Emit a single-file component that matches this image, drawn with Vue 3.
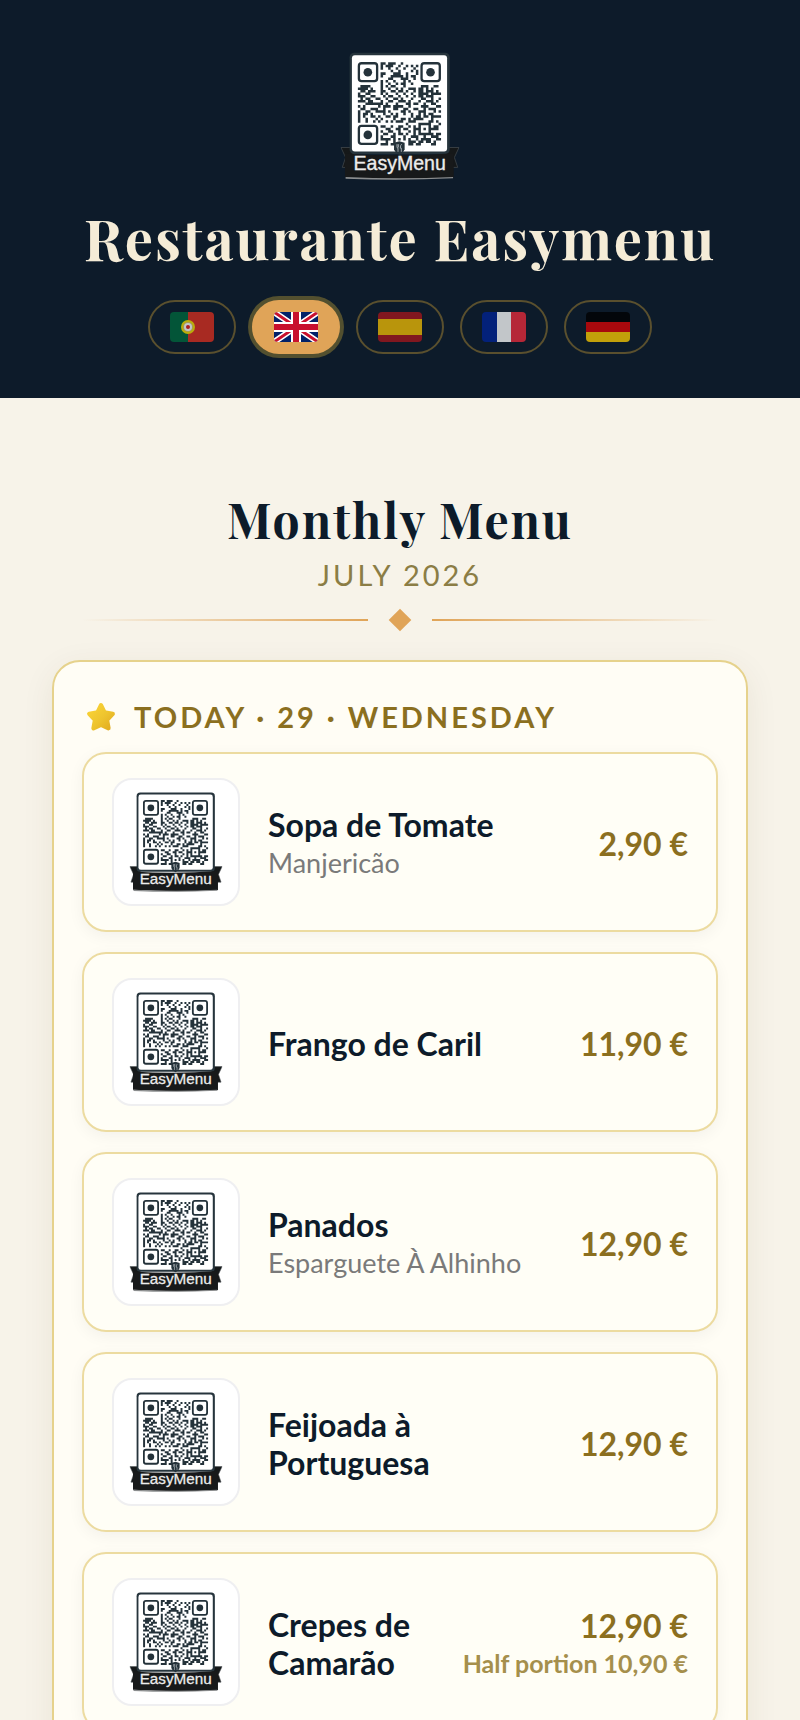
<template>
	<!-- Sprite: logo artwork used in the header and in each dish -->
	<svg class="sprite" aria-hidden="true">
		<symbol id="logo" viewBox="32 34 360 386">
			<path d="M34 322h40v60H38l10-30z" fill="#151819" stroke="#4a5054" stroke-width="2" />
			<path d="M390 322h-40v60h36l-10-30z" fill="#151819" stroke="#4a5054" stroke-width="2" />
			<rect x="60" y="36" width="302" height="306" rx="14" fill="#26343c" />
			<rect x="67" y="44" width="287" height="290" rx="9" fill="#fff" />
			<path :d="qrPath" fill="#24323a" />
			<g v-for="(f, i) in finders" :key="i">
				<rect :x="f.x" :y="f.y" width="55" height="54" rx="8" fill="#fff" stroke="#24323a" stroke-width="7" />
				<circle :cx="f.x + 27" :cy="f.y + 27" r="13" fill="#24323a" />
			</g>
			<path d="M46 341q164 10 328 -2v73q-164 10-328-1z" fill="#17191a" />
			<path d="M48 411q164 8 324 0v4q-164 8-324 1z" fill="#8b8d8e" />
			<path d="M194 308l16-5 16 5v19q-3 10-16 17q-13-7-16-17z" fill="#24323a" />
			<path d="M203 312v8q0 4 3 4v11M207 312v10M217 312q-4 2-4 12h3v11" fill="none" stroke="#dfe4e6" stroke-width="2" />
		</symbol>
	</svg>

	<header class="top">
		<svg class="logo" viewBox="0 0 360 386" role="img" aria-label="EasyMenu">
			<use href="#logo" width="360" height="386" />
			<text x="179" y="356" class="logo-text" text-anchor="middle">EasyMenu</text>
		</svg>
		<h1 class="tit-rest">Restaurante Easymenu</h1>
		<nav class="langs" aria-label="Language">
			<button v-for="l in langs" :key="l.code" type="button" class="lang" :class="{ active: lang === l.code }" :aria-label="l.name" @click="lang = l.code">
				<svg class="flag" viewBox="0 0 44 30">
					<g v-if="l.code === 'pt'">
						<path d="M0 0h18v30H0z" fill="#00693d" />
						<path d="M18 0h26v30H18z" fill="#dc2f20" />
						<circle cx="18" cy="15" r="7" fill="#f5e000" />
						<circle cx="18" cy="15" r="5" fill="#d8c36a" />
						<circle cx="18" cy="15" r="4" fill="#fff" />
						<circle cx="18" cy="15" r="2" fill="#e0201c" />
					</g>
					<g v-else-if="l.code === 'en'">
						<path d="M0 0h44v30H0z" fill="#012169" />
						<path d="M0 0l44 30M44 0L0 30" stroke="#fff" stroke-width="6" />
						<path d="M0 0l44 30M44 0L0 30" stroke="#c8102e" stroke-width="3" />
						<path d="M22 0v30M0 15h44" stroke="#fff" stroke-width="10" />
						<path d="M22 0v30M0 15h44" stroke="#c8102e" stroke-width="6" />
					</g>
					<g v-else-if="l.code === 'es'">
						<path d="M0 0h44v30H0z" fill="#a8161c" />
						<path d="M0 7h44v16H0z" fill="#f3be02" />
					</g>
					<g v-else-if="l.code === 'fr'">
						<path d="M0 0h15v30H0z" fill="#002495" />
						<path d="M15 0h14v30H15z" fill="#fff" />
						<path d="M29 0h15v30H29z" fill="#ee2c3c" />
					</g>
					<g v-else>
						<path d="M0 0h44v10H0z" fill="#000" />
						<path d="M0 10h44v10H0z" fill="#dc0404" />
						<path d="M0 20h44v10H0z" fill="#ffcd00" />
					</g>
				</svg>
			</button>
		</nav>
	</header>

	<main class="menu">
		<h2 class="tit-menu">Monthly Menu</h2>
		<p class="month">July 2026</p>
		<div class="divider"><span class="diamond"></span></div>

		<section class="day">
			<h3 class="tit-day">
				<svg class="star" viewBox="0 0 28 28">
					<defs>
						<linearGradient id="gold" x1="0" y1="0" x2="1" y2="1">
							<stop offset="0" stop-color="#fbd437" />
							<stop offset="0.55" stop-color="#eec42e" />
							<stop offset="1" stop-color="#e2ab20" />
						</linearGradient>
					</defs>
					<path d="M14 3l3.300 6.700 7.700 1.300-5.400 5.800 1.400 7.700-7-3.200-7 3.200 1.400-7.700L3 11l7.700-1.300z" fill="url(#gold)" stroke="url(#gold)" stroke-width="4" stroke-linejoin="round" />
				</svg>
				<span>Today · 29 · Wednesday</span>
			</h3>
			<ul class="dishes">
				<li v-for="d in dishes" :key="d.name" class="dish">
					<div class="thumb">
						<svg class="thumb-logo" viewBox="0 0 360 386" role="img" :aria-label="d.name">
							<use href="#logo" width="360" height="386" />
							<text x="179" y="356" class="logo-text" text-anchor="middle">EasyMenu</text>
						</svg>
					</div>
					<div class="info">
						<h4 class="name">{{ d.name }}</h4>
						<p v-if="d.side" class="side">{{ d.side }}</p>
					</div>
					<div class="prices">
						<div class="price">{{ d.price }} €</div>
						<div v-if="d.half" class="half">Half portion {{ d.half }} €</div>
					</div>
				</li>
			</ul>
		</section>
	</main>
</template>

<script setup>
import { ref } from 'vue'

const lang = ref('en')

const langs = [
	{ code: 'pt', name: 'Português' },
	{ code: 'en', name: 'English' },
	{ code: 'es', name: 'Español' },
	{ code: 'fr', name: 'Français' },
	{ code: 'de', name: 'Deutsch' },
]

const dishes = [
	{ name: 'Sopa de Tomate', side: 'Manjericão', price: '2,90' },
	{ name: 'Frango de Caril', price: '11,90' },
	{ name: 'Panados', side: 'Esparguete À Alhinho', price: '12,90' },
	{ name: 'Feijoada à Portuguesa', price: '12,90' },
	{ name: 'Crepes de Camarão', price: '12,90', half: '10,90' },
]

// the three corner squares of the code
const finders = [
	{ x: 88, y: 68 },
	{ x: 277, y: 68 },
	{ x: 88, y: 257 },
]

const qr = [
	'.........##.###..#...............',
	'.........#.###..#..#.#.#.........',
	'.........#..#..#..#...#..........',
	'.............#..#....#.#.........',
	'.........##...###..#...#.........',
	'.........#...#####.#.##..........',
	'............##...###..#..........',
	'.........#.#..#...#.#............',
	'.........#..#..#.##..#...........',
	'.####....#.#.##...#......###..##.',
	'####.#...#..#..#.#..###.##.#.#...',
	'.##.###..##..##.##.#..#.##.###.#.',
	'#..##....#.#...#..#..#..####.####',
	'###..##...#.##..#..#..#.##.###...',
	'.#.##..##..#..##.#...#...##..#..#',
	'###.##...#..##..###.#...#..###.#.',
	'...#######.#...#...##.##..#..##..',
	'#.#.....#.###.####..#....###...##',
	'.##..###..#...##..##..##..#.###..',
	'#..##..####.#....##.#...###...#.#',
	'#.##.#....#..#.#..#..#..#.#.##...',
	'#.#..##.#..##.##.....#.##.##.####',
	'#..#...#.#....#..##.#.####...#...',
	'#..#..#.#..#.#.###..###.....##.#.',
	'...................#....#####...#',
	'.........##..#..##..#.#.#...#.##.',
	'...........##..##.##..###.#.####.',
	'.........#..##..#...#.#.#...#....',
	'..........##..#.##.#..#.######.##',
	'.........#...##...#..###..#..###.',
	'.........####.#.#.#.#..#.####..##',
	'...........#..#.....###.##.##.#..',
	'.........###.##.....##.##....##..',
]

// one horizontal bar for each run of dark modules
const cell = 7.6
const qrPath = qr.map((row, r) =>
	[...row.matchAll(/#+/g)].map(m => {
		const w = m[0].length * cell
		return `M${85 + m.index * cell} ${65 + r * cell}h${w}v${cell}h${-w}z`
	}).join('')
).join('')
</script>

<style>
body {
	margin: 0;
	background: #f7f3e9;
}
</style>

<style scoped>
h1, h2, h3, h4, p, ul {
	margin: 0;
	padding: 0;
}

.sprite {
	display: block;
	width: 0;
	height: 0;
}

.logo-text {
	font-family: 'Liberation Sans', Arial, sans-serif;
	font-size: 59px;
	fill: #ececec;
	stroke: #ececec;
	stroke-width: 1px;
}

/* Header */
.top {
	display: flex;
	flex-direction: column;
	align-items: center;
	padding: 52px 40px 44px;
	background: #0d1b2a;
}

.logo {
	width: 120px;
	height: 128px;
}

.tit-rest {
	margin: 20px 0 24px;
	color: #f5ecd7;
	font-family: 'Playfair Display', 'Liberation Serif', serif;
	font-size: 56px;
	line-height: 76px;
	font-weight: 700;
	letter-spacing: 2px;
}

.langs {
	display: flex;
	gap: 16px;
}

.lang {
	display: flex;
	align-items: center;
	justify-content: center;
	width: 88px;
	height: 54px;
	padding: 0;
	border: 2px solid #5a502e;
	border-radius: 27px;
	background: transparent;
	cursor: pointer;
}

.lang.active {
	border-color: #e0a458;
	background: #e0a458;
	box-shadow: 0 0 0 4px #53502f;
}

.flag {
	width: 44px;
	height: 30px;
	border-radius: 4px;
	opacity: 0.75;
}

.active .flag {
	opacity: 1;
}

/* Menu */
.menu {
	padding: 86px 52px 40px;
	font-family: Lato, sans-serif;
}

.tit-menu {
	color: #0d1b2a;
	font-family: 'Playfair Display', 'Liberation Serif', serif;
	font-size: 48px;
	line-height: 70px;
	font-weight: 700;
	letter-spacing: 2px;
	text-align: center;
}

.month {
	margin-top: 2px;
	color: #8b7d45;
	font-size: 29px;
	line-height: 38px;
	letter-spacing: 3px;
	text-align: center;
	text-transform: uppercase;
}

.divider {
	display: flex;
	align-items: center;
	gap: 24px;
	margin: 18px 30px 32px;
}

.divider::before,
.divider::after {
	content: '';
	flex: 1;
	height: 2px;
	background: linear-gradient(to right, transparent, #e0a458);
}

.divider::after {
	background: linear-gradient(to left, transparent, #e0a458);
}

.diamond {
	width: 16px;
	height: 16px;
	background: #e0a458;
	transform: rotate(45deg);
}

.day {
	padding: 36px 28px;
	border: 2px solid #e6d28c;
	border-radius: 28px;
	background: #fffdf5;
	box-shadow: 0 8px 32px rgba(80, 60, 20, 0.08);
}

.tit-day {
	display: flex;
	align-items: center;
	gap: 18px;
	margin: 0 0 16px 4px;
	color: #8b6f1f;
	font-size: 29px;
	line-height: 38px;
	font-weight: 700;
	letter-spacing: 3px;
	text-transform: uppercase;
}

.star {
	width: 30px;
	height: 30px;
}

.dishes {
	display: flex;
	flex-direction: column;
	gap: 20px;
	list-style: none;
}

.dish {
	display: flex;
	align-items: center;
	gap: 28px;
	padding: 24px 28px;
	border: 2px solid #ecdba0;
	border-radius: 24px;
	background: #fffef6;
	box-shadow: 0 4px 16px rgba(13, 27, 42, 0.05);
}

.thumb {
	display: flex;
	align-items: center;
	justify-content: center;
	flex: none;
	box-sizing: border-box;
	width: 128px;
	height: 128px;
	border: 2px solid #efeff1;
	border-radius: 20px;
	background: #fff;
}

.thumb-logo {
	width: 94px;
	height: 100px;
}

.info,
.prices {
	padding-top: 4px;
}

.info {
	flex: 1;
	min-width: 0;
}

.name {
	color: #0d1b2a;
	font-size: 32px;
	line-height: 38px;
	font-weight: 700;
}

.side {
	color: #7a7a7a;
	font-size: 27px;
	line-height: 38px;
}

.prices {
	text-align: right;
	white-space: nowrap;
}

.price {
	color: #8b6f1f;
	font-size: 32px;
	line-height: 38px;
	font-weight: 700;
}

.half {
	color: #a58f4c;
	font-size: 25px;
	line-height: 36px;
	font-weight: 700;
}
</style>
